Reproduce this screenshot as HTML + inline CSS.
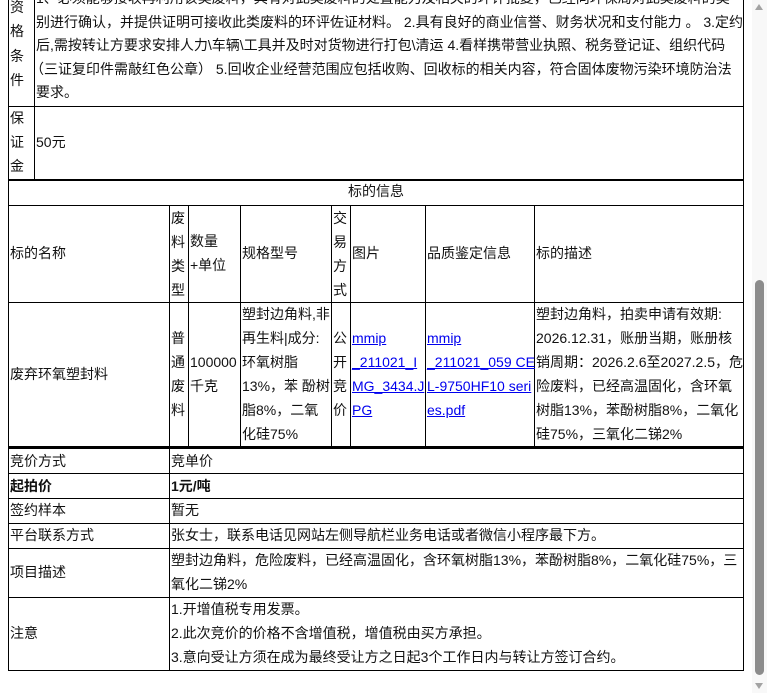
<!DOCTYPE html>
<html><head><meta charset="utf-8"><style>
*{margin:0;padding:0;box-sizing:border-box}
body{width:767px;height:693px;overflow:hidden;background:#fff;position:relative;font-family:"Liberation Sans","Noto Sans CJK SC",sans-serif;font-size:14px;color:#111}
.t{position:absolute;white-space:nowrap;line-height:24px;height:24px}
.h{position:absolute;background:#000;height:1px}
.v{position:absolute;background:#000;width:1px}
a{color:#00e;text-decoration:underline}
b{font-weight:bold}
</style></head><body>
<div class="v" style="left:8px;top:0;height:671px"></div>
<div class="v" style="left:743px;top:0;height:671px"></div>
<div class="v" style="left:34px;top:0;height:180px"></div>
<div class="h" style="left:8px;top:106px;width:736px"></div>
<div class="h" style="left:8px;top:179px;width:736px;height:2px"></div>
<div class="t" style="left:10px;top:-5px">资</div>
<div class="t" style="left:10px;top:19px">格</div>
<div class="t" style="left:10px;top:44px">条</div>
<div class="t" style="left:10px;top:68px">件</div>
<div class="t" style="left:36px;top:-14px">1、必须能够接收再利用该类废料，具有对此类废料的处置能力及相关的环评批复，已经向环保局对此类废料的类</div>
<div class="t" style="left:36px;top:10px">别进行确认，并提供证明可接收此类废料的环评佐证材料。 2.具有良好的商业信誉、财务状况和支付能力 。 3.定约</div>
<div class="t" style="left:36px;top:33px">后,需按转让方要求安排人力\车辆\工具并及时对货物进行打包\清运 4.看样携带营业执照、税务登记证、组织代码</div>
<div class="t" style="left:30px;top:57px">（三证复印件需敲红色公章） 5.回收企业经营范围应包括收购、回收标的相关内容，符合固体废物污染环境防治法</div>
<div class="t" style="left:36px;top:80px">要求。</div>
<div class="t" style="left:10px;top:106px">保</div>
<div class="t" style="left:10px;top:130px">证</div>
<div class="t" style="left:10px;top:154px">金</div>
<div class="t" style="left:36px;top:130px">50元</div>
<div class="t" style="left:8px;width:736px;text-align:center;top:179px">标的信息</div>
<div class="h" style="left:8px;top:205px;width:736px"></div>
<div class="h" style="left:8px;top:302px;width:736px"></div>
<div class="h" style="left:8px;top:446px;width:736px;height:3px"></div>
<div class="v" style="left:169px;top:205px;height:466px"></div>
<div class="v" style="left:188px;top:205px;height:241px"></div>
<div class="v" style="left:240px;top:205px;height:241px"></div>
<div class="v" style="left:331px;top:205px;height:241px"></div>
<div class="v" style="left:350px;top:205px;height:241px"></div>
<div class="v" style="left:425px;top:205px;height:241px"></div>
<div class="v" style="left:534px;top:205px;height:241px"></div>
<div class="t" style="left:10px;top:241px">标的名称</div>
<div class="t" style="left:171px;top:206px">废</div>
<div class="t" style="left:171px;top:230px">料</div>
<div class="t" style="left:171px;top:254px">类</div>
<div class="t" style="left:171px;top:278px">型</div>
<div class="t" style="left:190px;top:229px">数量</div>
<div class="t" style="left:190px;top:253px">+单位</div>
<div class="t" style="left:242px;top:241px">规格型号</div>
<div class="t" style="left:333px;top:206px">交</div>
<div class="t" style="left:333px;top:230px">易</div>
<div class="t" style="left:333px;top:254px">方</div>
<div class="t" style="left:333px;top:278px">式</div>
<div class="t" style="left:352px;top:241px">图片</div>
<div class="t" style="left:427px;top:241px">品质鉴定信息</div>
<div class="t" style="left:536px;top:241px">标的描述</div>
<div class="t" style="left:10px;top:362px">废弃环氧塑封料</div>
<div class="t" style="left:171px;top:326px">普</div>
<div class="t" style="left:171px;top:350px">通</div>
<div class="t" style="left:171px;top:374px">废</div>
<div class="t" style="left:171px;top:398px">料</div>
<div class="t" style="left:190px;top:350px">100000</div>
<div class="t" style="left:190px;top:374px">千克</div>
<div class="t" style="left:242px;top:302px">塑封边角料,非</div>
<div class="t" style="left:242px;top:326px">再生料|成分:</div>
<div class="t" style="left:242px;top:350px">环氧树脂</div>
<div class="t" style="left:242px;top:374px">13%，苯 酚树</div>
<div class="t" style="left:242px;top:398px">脂8%，二氧</div>
<div class="t" style="left:242px;top:422px">化硅75%</div>
<div class="t" style="left:333px;top:326px">公</div>
<div class="t" style="left:333px;top:350px">开</div>
<div class="t" style="left:333px;top:374px">竞</div>
<div class="t" style="left:333px;top:398px">价</div>
<div class="t" style="left:352px;top:326px"><a>mmip</a></div>
<div class="t" style="left:352px;top:350px"><a>_211021_I</a></div>
<div class="t" style="left:352px;top:374px"><a>MG_3434.J</a></div>
<div class="t" style="left:352px;top:398px"><a>PG</a></div>
<div class="t" style="left:427px;top:326px"><a>mmip</a></div>
<div class="t" style="left:427px;top:350px"><a>_211021_059 CE</a></div>
<div class="t" style="left:427px;top:374px"><a>L-9750HF10 seri</a></div>
<div class="t" style="left:427px;top:398px"><a>es.pdf</a></div>
<div class="t" style="left:536px;top:302px">塑封边角料，拍卖申请有效期:</div>
<div class="t" style="left:536px;top:326px">2026.12.31，账册当期，账册核</div>
<div class="t" style="left:536px;top:350px">销周期：2026.2.6至2027.2.5，危</div>
<div class="t" style="left:536px;top:374px">险废料，已经高温固化，含环氧</div>
<div class="t" style="left:536px;top:398px">树脂13%，苯酚树脂8%，二氧化</div>
<div class="t" style="left:536px;top:422px">硅75%，三氧化二锑2%</div>
<div class="h" style="left:8px;top:473px;width:736px"></div>
<div class="h" style="left:8px;top:498px;width:736px"></div>
<div class="h" style="left:8px;top:523px;width:736px"></div>
<div class="h" style="left:8px;top:548px;width:736px"></div>
<div class="h" style="left:8px;top:597px;width:736px"></div>
<div class="h" style="left:8px;top:670px;width:736px"></div>
<div class="t" style="left:10px;top:449px">竞价方式</div>
<div class="t" style="left:171px;top:449px">竞单价</div>
<div class="t" style="left:10px;top:474px"><b>起拍价</b></div>
<div class="t" style="left:171px;top:474px"><b>1元/吨</b></div>
<div class="t" style="left:10px;top:498px">签约样本</div>
<div class="t" style="left:171px;top:498px">暂无</div>
<div class="t" style="left:10px;top:523px">平台联系方式</div>
<div class="t" style="left:171px;top:523px">张女士，联系电话见网站左侧导航栏业务电话或者微信小程序最下方。</div>
<div class="t" style="left:10px;top:560px">项目描述</div>
<div class="t" style="left:171px;top:548px">塑封边角料，危险废料，已经高温固化，含环氧树脂13%，苯酚树脂8%，二氧化硅75%，三</div>
<div class="t" style="left:171px;top:572px">氧化二锑2%</div>
<div class="t" style="left:10px;top:621px">注意</div>
<div class="t" style="left:171px;top:597px">1.开增值税专用发票。</div>
<div class="t" style="left:171px;top:621px">2.此次竞价的价格不含增值税，增值税由买方承担。</div>
<div class="t" style="left:171px;top:645px">3.意向受让方须在成为最终受让方之日起3个工作日内与转让方签订合约。</div>
<div style="position:absolute;left:752px;top:0;width:15px;height:693px;background:#f8f8f8"></div>
<div style="position:absolute;left:755px;top:280px;width:9px;height:395px;background:#8c8c8c;border-radius:5px"></div>
<div style="position:absolute;left:755px;top:4px;width:0;height:0;border-left:4px solid transparent;border-right:4px solid transparent;border-bottom:6px solid #a3a3a3"></div>
<div style="position:absolute;left:755px;top:683px;width:0;height:0;border-left:4px solid transparent;border-right:4px solid transparent;border-top:6px solid #a3a3a3"></div>
</body></html>
